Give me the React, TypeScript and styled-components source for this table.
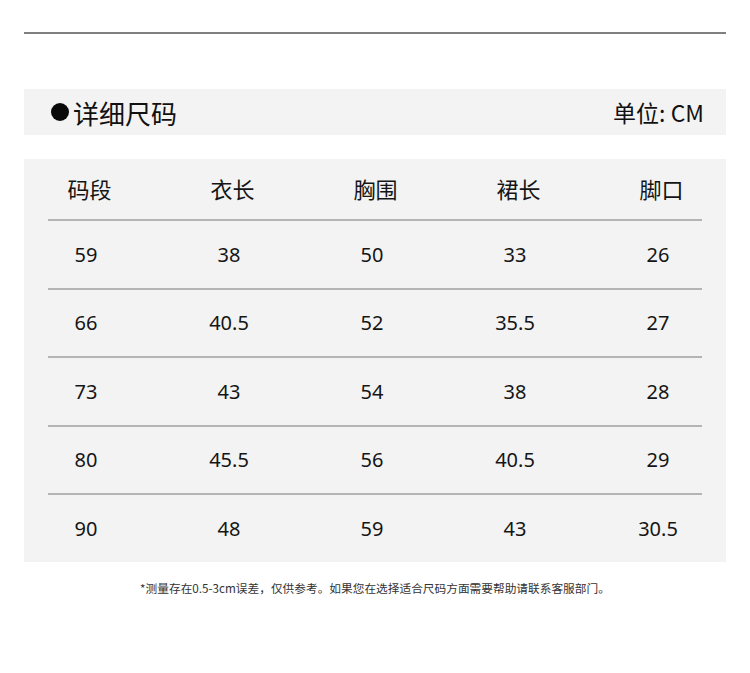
import styled, { createGlobalStyle } from 'styled-components';

const GlobalStyle = createGlobalStyle`
  body {
    margin: 0;
    background: #ffffff;
    font-family: "Noto Sans", "Noto Sans CJK SC", sans-serif;
    color: #111;
  }
`;

const Page = styled.div`
  width: 750px;
  height: 673px;
  padding: 32px 24px 0;
  box-sizing: border-box;
`;

const TopRule = styled.div`
  height: 2px;
  background: #808080;
`;

const TitleBar = styled.div`
  margin-top: 55px;
  height: 46px;
  background: #f3f3f3;
  display: flex;
  align-items: center;
  justify-content: space-between;
  padding: 0 22px 0 27px;
`;

const Title = styled.div`
  display: flex;
  align-items: center;
  gap: 4px;
  font-family: "Noto Sans CJK SC", sans-serif;
  font-size: 26px;
  color: #111;
`;

const Dot = styled.span`
  width: 18px;
  height: 18px;
  border-radius: 50%;
  background: #0a0a0a;
`;

const Unit = styled.div`
  font-family: "Noto Sans CJK SC", sans-serif;
  font-size: 23px;
  color: #111;
`;

const TableBox = styled.div`
  margin-top: 24px;
  background: #f3f3f3;
  padding: 0 24px;
`;

const Row = styled.div<{ head?: boolean; last?: boolean }>`
  display: grid;
  grid-template-columns: repeat(5, 76px);
  column-gap: 67px;
  align-items: center;
  height: ${({ head, last }) => (head ? '62px' : last ? '67px' : '68.5px')};
  border-bottom: ${({ last }) => (last ? 'none' : '2px solid #b4b4b4')};
  box-sizing: border-box;
`;

const Cell = styled.div<{ head?: boolean }>`
  text-align: center;
  font-family: ${({ head }) =>
    head ? '"Noto Sans CJK SC", sans-serif' : '"Noto Sans", "Noto Sans CJK SC", sans-serif'};
  font-size: ${({ head }) => (head ? '22px' : '20px')};
  color: #151515;
  white-space: nowrap;
  padding-left: ${({ head }) => (head ? '7px' : '0')};
  margin-top: ${({ head }) => (head ? '-3px' : '0')};
`;

const Note = styled.div`
  margin-top: 17px;
  text-align: center;
  font-family: "Noto Sans CJK SC", sans-serif;
  font-size: 11.7px;
  color: #333;
`;

const headers = ['码段', '衣长', '胸围', '裙长', '脚口'];

const rows = [
  ['59', '38', '50', '33', '26'],
  ['66', '40.5', '52', '35.5', '27'],
  ['73', '43', '54', '38', '28'],
  ['80', '45.5', '56', '40.5', '29'],
  ['90', '48', '59', '43', '30.5'],
];

export default function App() {
  return (
    <>
      <GlobalStyle />
      <Page>
        <TopRule />
        <TitleBar>
          <Title>
            <Dot />
            详细尺码
          </Title>
          <Unit>单位: CM</Unit>
        </TitleBar>
        <TableBox>
          <Row head>
            {headers.map((h) => (
              <Cell head key={h}>
                {h}
              </Cell>
            ))}
          </Row>
          {rows.map((r, i) => (
            <Row key={i} last={i === rows.length - 1}>
              {r.map((v, j) => (
                <Cell key={j}>{v}</Cell>
              ))}
            </Row>
          ))}
        </TableBox>
        <Note>*测量存在0.5-3cm误差，仅供参考。如果您在选择适合尺码方面需要帮助请联系客服部门。</Note>
      </Page>
    </>
  );
}
